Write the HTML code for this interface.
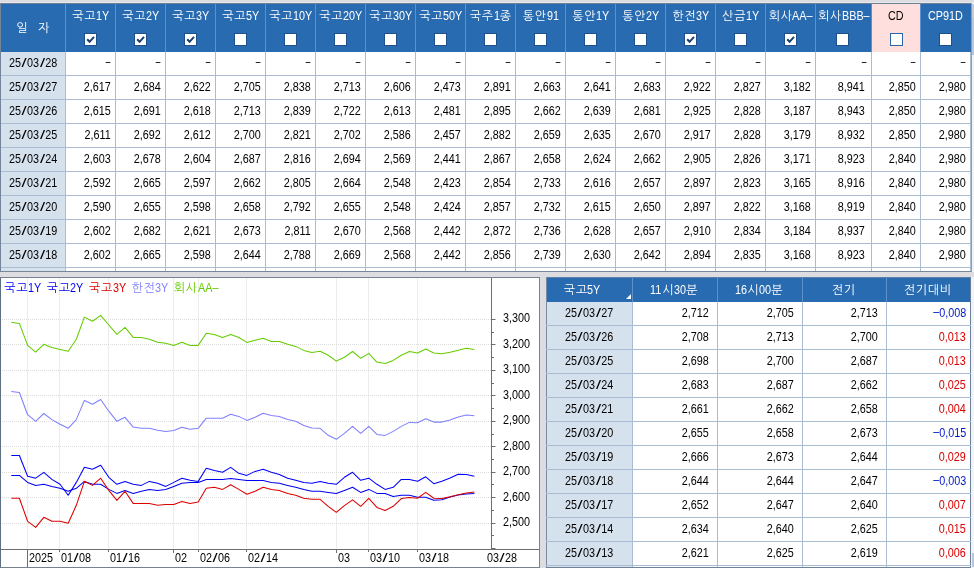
<!DOCTYPE html><html lang="ko"><head><meta charset="utf-8"><title>채권 금리</title><style>

html,body{margin:0;padding:0}
body{width:974px;height:568px;overflow:hidden;background:#dddde1;position:relative;font-family:"Liberation Sans","NanumGothic",sans-serif;font-size:13.5px;color:#000}
div,span,svg{box-sizing:border-box}
#w{position:absolute;left:0;top:0;width:974px;height:568px;will-change:transform}
.abs,.c,.l,.h,.d,.n{position:absolute}
.k{display:inline-block;width:12px;height:14px;line-height:14px;font-size:12px;text-align:center;vertical-align:baseline;overflow:visible;white-space:nowrap;font-family:"Liberation Sans","NanumGothic",sans-serif}
.t{display:inline-block;transform:scaleX(.80);transform-origin:0 50%;white-space:pre;text-align:left}
.lab{position:absolute;height:14px;line-height:14px;white-space:nowrap;text-align:center;color:#fff}
.n{height:14px;line-height:14px;text-align:right;white-space:nowrap}
.n b{font-weight:normal;display:inline-block;transform:scaleX(.80);transform-origin:100% 50%}
.d{height:14px;line-height:14px;text-align:center;white-space:nowrap}
.d b{font-weight:normal;display:inline-block;transform:scaleX(.80);transform-origin:50% 50%}
.d i,.x i{font-style:normal;display:inline-block;transform:scaleX(1.7);margin:0 1.9px}
.x{position:absolute;height:14px;line-height:14px;white-space:nowrap}
.x b{font-weight:normal;display:inline-block;transform:scaleX(.80);transform-origin:0 50%}
.cb{position:absolute;width:13px;height:13px;background:#fff;border:1px solid #1d4f8a}
.cb svg{position:absolute;left:0;top:0;width:11px;height:11px}
.n u{text-decoration:none;position:relative;top:-1px}
.red{color:#d80000}.blu{color:#0018c8}

</style></head><body><div id="w">
<div class="abs" style="left:0px;top:2px;width:974px;height:1px;background:#e8e8ec;"></div>
<div class="abs" style="left:0px;top:3px;width:971px;height:269px;background:#fff;"></div>
<div class="abs" style="left:0px;top:3px;width:971px;height:1px;background:#6f8197;"></div>
<div class="abs" style="left:0px;top:4px;width:971px;height:48px;background:#286bb1;"></div>
<div class="abs" style="left:871px;top:4px;width:49px;height:48px;background:#ffdede;"></div>
<div class="abs" style="left:1px;top:52px;width:64px;height:219px;background:#d6e1ee;"></div>
<div class="abs" style="left:65px;top:4px;width:1px;height:48px;background:#5f90c8;"></div>
<div class="abs" style="left:115px;top:4px;width:1px;height:48px;background:#5f90c8;"></div>
<div class="abs" style="left:165px;top:4px;width:1px;height:48px;background:#5f90c8;"></div>
<div class="abs" style="left:215px;top:4px;width:1px;height:48px;background:#5f90c8;"></div>
<div class="abs" style="left:265px;top:4px;width:1px;height:48px;background:#5f90c8;"></div>
<div class="abs" style="left:315px;top:4px;width:1px;height:48px;background:#5f90c8;"></div>
<div class="abs" style="left:365px;top:4px;width:1px;height:48px;background:#5f90c8;"></div>
<div class="abs" style="left:415px;top:4px;width:1px;height:48px;background:#5f90c8;"></div>
<div class="abs" style="left:465px;top:4px;width:1px;height:48px;background:#5f90c8;"></div>
<div class="abs" style="left:515px;top:4px;width:1px;height:48px;background:#5f90c8;"></div>
<div class="abs" style="left:565px;top:4px;width:1px;height:48px;background:#5f90c8;"></div>
<div class="abs" style="left:615px;top:4px;width:1px;height:48px;background:#5f90c8;"></div>
<div class="abs" style="left:665px;top:4px;width:1px;height:48px;background:#5f90c8;"></div>
<div class="abs" style="left:715px;top:4px;width:1px;height:48px;background:#5f90c8;"></div>
<div class="abs" style="left:765px;top:4px;width:1px;height:48px;background:#5f90c8;"></div>
<div class="abs" style="left:815px;top:4px;width:1px;height:48px;background:#5f90c8;"></div>
<div class="abs" style="left:871px;top:4px;width:1px;height:48px;background:#5f90c8;"></div>
<div class="abs" style="left:920px;top:4px;width:1px;height:48px;background:#5f90c8;"></div>
<div class="abs" style="left:65px;top:52px;width:1px;height:219px;background:#a9bcd1;"></div>
<div class="abs" style="left:115px;top:52px;width:1px;height:219px;background:#a9bcd1;"></div>
<div class="abs" style="left:165px;top:52px;width:1px;height:219px;background:#a9bcd1;"></div>
<div class="abs" style="left:215px;top:52px;width:1px;height:219px;background:#a9bcd1;"></div>
<div class="abs" style="left:265px;top:52px;width:1px;height:219px;background:#a9bcd1;"></div>
<div class="abs" style="left:315px;top:52px;width:1px;height:219px;background:#a9bcd1;"></div>
<div class="abs" style="left:365px;top:52px;width:1px;height:219px;background:#a9bcd1;"></div>
<div class="abs" style="left:415px;top:52px;width:1px;height:219px;background:#a9bcd1;"></div>
<div class="abs" style="left:465px;top:52px;width:1px;height:219px;background:#a9bcd1;"></div>
<div class="abs" style="left:515px;top:52px;width:1px;height:219px;background:#a9bcd1;"></div>
<div class="abs" style="left:565px;top:52px;width:1px;height:219px;background:#a9bcd1;"></div>
<div class="abs" style="left:615px;top:52px;width:1px;height:219px;background:#a9bcd1;"></div>
<div class="abs" style="left:665px;top:52px;width:1px;height:219px;background:#a9bcd1;"></div>
<div class="abs" style="left:715px;top:52px;width:1px;height:219px;background:#a9bcd1;"></div>
<div class="abs" style="left:765px;top:52px;width:1px;height:219px;background:#a9bcd1;"></div>
<div class="abs" style="left:815px;top:52px;width:1px;height:219px;background:#a9bcd1;"></div>
<div class="abs" style="left:871px;top:52px;width:1px;height:219px;background:#a9bcd1;"></div>
<div class="abs" style="left:920px;top:52px;width:1px;height:219px;background:#a9bcd1;"></div>
<div class="abs" style="left:970px;top:52px;width:1px;height:219px;background:#a9bcd1;"></div>
<div class="abs" style="left:1px;top:75px;width:969px;height:1px;background:#a9bcd1;"></div>
<div class="abs" style="left:1px;top:99px;width:969px;height:1px;background:#a9bcd1;"></div>
<div class="abs" style="left:1px;top:123px;width:969px;height:1px;background:#a9bcd1;"></div>
<div class="abs" style="left:1px;top:147px;width:969px;height:1px;background:#a9bcd1;"></div>
<div class="abs" style="left:1px;top:171px;width:969px;height:1px;background:#a9bcd1;"></div>
<div class="abs" style="left:1px;top:195px;width:969px;height:1px;background:#a9bcd1;"></div>
<div class="abs" style="left:1px;top:219px;width:969px;height:1px;background:#a9bcd1;"></div>
<div class="abs" style="left:1px;top:243px;width:969px;height:1px;background:#a9bcd1;"></div>
<div class="abs" style="left:1px;top:267px;width:969px;height:1px;background:#a9bcd1;"></div>
<div class="abs" style="left:0px;top:3px;width:1px;height:269px;background:#73859b;"></div>
<div class="abs" style="left:0px;top:271px;width:971px;height:1px;background:#77879a;"></div>
<div class="abs" style="left:971px;top:3px;width:3px;height:269px;background:#f2f3f7;"></div>
<div class="abs" style="left:971px;top:3px;width:1px;height:269px;background:#8d9db2;"></div>
<div class="abs" style="left:972px;top:4px;width:2px;height:14px;background:#c8ccd4;"></div>
<div class="abs" style="left:972px;top:18px;width:2px;height:37px;background:#b9c7dc;"></div>
<div class="lab" style="left:1px;top:21px;width:64px"><span class="k">일</span><span style="display:inline-block;width:10px"></span><span class="k">자</span></div>
<div class="lab" style="left:50.5px;top:9px;width:80px;color:#fff"><span class="k">국</span><span class="k">고</span><span class="t" style="width:13.2px">1Y</span></div>
<div class="cb" style="left:84px;top:33px"><svg viewBox="0 0 11 11"><path d="M2.2 5.2 L4.6 7.8 L9 2.8" fill="none" stroke="#1b3f6f" stroke-width="2"/></svg></div>
<div class="lab" style="left:100.5px;top:9px;width:80px;color:#fff"><span class="k">국</span><span class="k">고</span><span class="t" style="width:13.2px">2Y</span></div>
<div class="cb" style="left:134px;top:33px"><svg viewBox="0 0 11 11"><path d="M2.2 5.2 L4.6 7.8 L9 2.8" fill="none" stroke="#1b3f6f" stroke-width="2"/></svg></div>
<div class="lab" style="left:150.5px;top:9px;width:80px;color:#fff"><span class="k">국</span><span class="k">고</span><span class="t" style="width:13.2px">3Y</span></div>
<div class="cb" style="left:184px;top:33px"><svg viewBox="0 0 11 11"><path d="M2.2 5.2 L4.6 7.8 L9 2.8" fill="none" stroke="#1b3f6f" stroke-width="2"/></svg></div>
<div class="lab" style="left:200.5px;top:9px;width:80px;color:#fff"><span class="k">국</span><span class="k">고</span><span class="t" style="width:13.2px">5Y</span></div>
<div class="cb" style="left:234px;top:33px"></div>
<div class="lab" style="left:250.5px;top:9px;width:80px;color:#fff"><span class="k">국</span><span class="k">고</span><span class="t" style="width:19.2px">10Y</span></div>
<div class="cb" style="left:284px;top:33px"></div>
<div class="lab" style="left:300.5px;top:9px;width:80px;color:#fff"><span class="k">국</span><span class="k">고</span><span class="t" style="width:19.2px">20Y</span></div>
<div class="cb" style="left:334px;top:33px"></div>
<div class="lab" style="left:350.5px;top:9px;width:80px;color:#fff"><span class="k">국</span><span class="k">고</span><span class="t" style="width:19.2px">30Y</span></div>
<div class="cb" style="left:384px;top:33px"></div>
<div class="lab" style="left:400.5px;top:9px;width:80px;color:#fff"><span class="k">국</span><span class="k">고</span><span class="t" style="width:19.2px">50Y</span></div>
<div class="cb" style="left:434px;top:33px"></div>
<div class="lab" style="left:450.5px;top:9px;width:80px;color:#fff"><span class="k">국</span><span class="k">주</span><span class="t" style="width:6.0px">1</span><span class="k">종</span></div>
<div class="cb" style="left:484px;top:33px"></div>
<div class="lab" style="left:500.5px;top:9px;width:80px;color:#fff"><span class="k">통</span><span class="k">안</span><span class="t" style="width:12.0px">91</span></div>
<div class="cb" style="left:534px;top:33px"></div>
<div class="lab" style="left:550.5px;top:9px;width:80px;color:#fff"><span class="k">통</span><span class="k">안</span><span class="t" style="width:13.2px">1Y</span></div>
<div class="cb" style="left:584px;top:33px"></div>
<div class="lab" style="left:600.5px;top:9px;width:80px;color:#fff"><span class="k">통</span><span class="k">안</span><span class="t" style="width:13.2px">2Y</span></div>
<div class="cb" style="left:634px;top:33px"></div>
<div class="lab" style="left:650.5px;top:9px;width:80px;color:#fff"><span class="k">한</span><span class="k">전</span><span class="t" style="width:13.2px">3Y</span></div>
<div class="cb" style="left:684px;top:33px"><svg viewBox="0 0 11 11"><path d="M2.2 5.2 L4.6 7.8 L9 2.8" fill="none" stroke="#1b3f6f" stroke-width="2"/></svg></div>
<div class="lab" style="left:700.5px;top:9px;width:80px;color:#fff"><span class="k">산</span><span class="k">금</span><span class="t" style="width:13.2px">1Y</span></div>
<div class="cb" style="left:734px;top:33px"></div>
<div class="lab" style="left:750.5px;top:9px;width:80px;color:#fff"><span class="k">회</span><span class="k">사</span><span class="t" style="width:20.4px">AA–</span></div>
<div class="cb" style="left:784px;top:33px"><svg viewBox="0 0 11 11"><path d="M2.2 5.2 L4.6 7.8 L9 2.8" fill="none" stroke="#1b3f6f" stroke-width="2"/></svg></div>
<div class="lab" style="left:803.5px;top:9px;width:80px;color:#fff"><span class="k">회</span><span class="k">사</span><span class="t" style="width:27.6px">BBB–</span></div>
<div class="cb" style="left:836px;top:33px"></div>
<div class="lab" style="left:856px;top:9px;width:80px;color:#000"><span class="t" style="width:15.6px">CD</span></div>
<div class="cb" style="left:890px;top:33px;border-color:#2d66a8"></div>
<div class="lab" style="left:905.5px;top:9px;width:80px;color:#fff"><span class="t" style="width:34.8px">CP91D</span></div>
<div class="cb" style="left:939px;top:33px"></div>
<div class="d" style="left:1px;top:56px;width:64px"><b>25<i>/</i>03<i>/</i>28</b></div>
<div class="n" style="left:65px;top:55px;width:46px"><b style="transform:scaleX(.62)">–</b></div>
<div class="n" style="left:115px;top:55px;width:46px"><b style="transform:scaleX(.62)">–</b></div>
<div class="n" style="left:165px;top:55px;width:46px"><b style="transform:scaleX(.62)">–</b></div>
<div class="n" style="left:215px;top:55px;width:46px"><b style="transform:scaleX(.62)">–</b></div>
<div class="n" style="left:265px;top:55px;width:46px"><b style="transform:scaleX(.62)">–</b></div>
<div class="n" style="left:315px;top:55px;width:46px"><b style="transform:scaleX(.62)">–</b></div>
<div class="n" style="left:365px;top:55px;width:46px"><b style="transform:scaleX(.62)">–</b></div>
<div class="n" style="left:415px;top:55px;width:46px"><b style="transform:scaleX(.62)">–</b></div>
<div class="n" style="left:465px;top:55px;width:46px"><b style="transform:scaleX(.62)">–</b></div>
<div class="n" style="left:515px;top:55px;width:46px"><b style="transform:scaleX(.62)">–</b></div>
<div class="n" style="left:565px;top:55px;width:46px"><b style="transform:scaleX(.62)">–</b></div>
<div class="n" style="left:615px;top:55px;width:46px"><b style="transform:scaleX(.62)">–</b></div>
<div class="n" style="left:665px;top:55px;width:46px"><b style="transform:scaleX(.62)">–</b></div>
<div class="n" style="left:715px;top:55px;width:46px"><b style="transform:scaleX(.62)">–</b></div>
<div class="n" style="left:765px;top:55px;width:46px"><b style="transform:scaleX(.62)">–</b></div>
<div class="n" style="left:815px;top:55px;width:52px"><b style="transform:scaleX(.62)">–</b></div>
<div class="n" style="left:871px;top:55px;width:45px"><b style="transform:scaleX(.62)">–</b></div>
<div class="n" style="left:920px;top:55px;width:46px"><b style="transform:scaleX(.62)">–</b></div>
<div class="d" style="left:1px;top:80px;width:64px"><b>25<i>/</i>03<i>/</i>27</b></div>
<div class="n" style="left:65px;top:80px;width:46px"><b>2,617</b></div>
<div class="n" style="left:115px;top:80px;width:46px"><b>2,684</b></div>
<div class="n" style="left:165px;top:80px;width:46px"><b>2,622</b></div>
<div class="n" style="left:215px;top:80px;width:46px"><b>2,705</b></div>
<div class="n" style="left:265px;top:80px;width:46px"><b>2,838</b></div>
<div class="n" style="left:315px;top:80px;width:46px"><b>2,713</b></div>
<div class="n" style="left:365px;top:80px;width:46px"><b>2,606</b></div>
<div class="n" style="left:415px;top:80px;width:46px"><b>2,473</b></div>
<div class="n" style="left:465px;top:80px;width:46px"><b>2,891</b></div>
<div class="n" style="left:515px;top:80px;width:46px"><b>2,663</b></div>
<div class="n" style="left:565px;top:80px;width:46px"><b>2,641</b></div>
<div class="n" style="left:615px;top:80px;width:46px"><b>2,683</b></div>
<div class="n" style="left:665px;top:80px;width:46px"><b>2,922</b></div>
<div class="n" style="left:715px;top:80px;width:46px"><b>2,827</b></div>
<div class="n" style="left:765px;top:80px;width:46px"><b>3,182</b></div>
<div class="n" style="left:815px;top:80px;width:50px"><b>8,941</b></div>
<div class="n" style="left:871px;top:80px;width:45px"><b>2,850</b></div>
<div class="n" style="left:920px;top:80px;width:46px"><b>2,980</b></div>
<div class="d" style="left:1px;top:104px;width:64px"><b>25<i>/</i>03<i>/</i>26</b></div>
<div class="n" style="left:65px;top:104px;width:46px"><b>2,615</b></div>
<div class="n" style="left:115px;top:104px;width:46px"><b>2,691</b></div>
<div class="n" style="left:165px;top:104px;width:46px"><b>2,618</b></div>
<div class="n" style="left:215px;top:104px;width:46px"><b>2,713</b></div>
<div class="n" style="left:265px;top:104px;width:46px"><b>2,839</b></div>
<div class="n" style="left:315px;top:104px;width:46px"><b>2,722</b></div>
<div class="n" style="left:365px;top:104px;width:46px"><b>2,613</b></div>
<div class="n" style="left:415px;top:104px;width:46px"><b>2,481</b></div>
<div class="n" style="left:465px;top:104px;width:46px"><b>2,895</b></div>
<div class="n" style="left:515px;top:104px;width:46px"><b>2,662</b></div>
<div class="n" style="left:565px;top:104px;width:46px"><b>2,639</b></div>
<div class="n" style="left:615px;top:104px;width:46px"><b>2,681</b></div>
<div class="n" style="left:665px;top:104px;width:46px"><b>2,925</b></div>
<div class="n" style="left:715px;top:104px;width:46px"><b>2,828</b></div>
<div class="n" style="left:765px;top:104px;width:46px"><b>3,187</b></div>
<div class="n" style="left:815px;top:104px;width:50px"><b>8,943</b></div>
<div class="n" style="left:871px;top:104px;width:45px"><b>2,850</b></div>
<div class="n" style="left:920px;top:104px;width:46px"><b>2,980</b></div>
<div class="d" style="left:1px;top:128px;width:64px"><b>25<i>/</i>03<i>/</i>25</b></div>
<div class="n" style="left:65px;top:128px;width:46px"><b>2,611</b></div>
<div class="n" style="left:115px;top:128px;width:46px"><b>2,692</b></div>
<div class="n" style="left:165px;top:128px;width:46px"><b>2,612</b></div>
<div class="n" style="left:215px;top:128px;width:46px"><b>2,700</b></div>
<div class="n" style="left:265px;top:128px;width:46px"><b>2,821</b></div>
<div class="n" style="left:315px;top:128px;width:46px"><b>2,702</b></div>
<div class="n" style="left:365px;top:128px;width:46px"><b>2,586</b></div>
<div class="n" style="left:415px;top:128px;width:46px"><b>2,457</b></div>
<div class="n" style="left:465px;top:128px;width:46px"><b>2,882</b></div>
<div class="n" style="left:515px;top:128px;width:46px"><b>2,659</b></div>
<div class="n" style="left:565px;top:128px;width:46px"><b>2,635</b></div>
<div class="n" style="left:615px;top:128px;width:46px"><b>2,670</b></div>
<div class="n" style="left:665px;top:128px;width:46px"><b>2,917</b></div>
<div class="n" style="left:715px;top:128px;width:46px"><b>2,828</b></div>
<div class="n" style="left:765px;top:128px;width:46px"><b>3,179</b></div>
<div class="n" style="left:815px;top:128px;width:50px"><b>8,932</b></div>
<div class="n" style="left:871px;top:128px;width:45px"><b>2,850</b></div>
<div class="n" style="left:920px;top:128px;width:46px"><b>2,980</b></div>
<div class="d" style="left:1px;top:152px;width:64px"><b>25<i>/</i>03<i>/</i>24</b></div>
<div class="n" style="left:65px;top:152px;width:46px"><b>2,603</b></div>
<div class="n" style="left:115px;top:152px;width:46px"><b>2,678</b></div>
<div class="n" style="left:165px;top:152px;width:46px"><b>2,604</b></div>
<div class="n" style="left:215px;top:152px;width:46px"><b>2,687</b></div>
<div class="n" style="left:265px;top:152px;width:46px"><b>2,816</b></div>
<div class="n" style="left:315px;top:152px;width:46px"><b>2,694</b></div>
<div class="n" style="left:365px;top:152px;width:46px"><b>2,569</b></div>
<div class="n" style="left:415px;top:152px;width:46px"><b>2,441</b></div>
<div class="n" style="left:465px;top:152px;width:46px"><b>2,867</b></div>
<div class="n" style="left:515px;top:152px;width:46px"><b>2,658</b></div>
<div class="n" style="left:565px;top:152px;width:46px"><b>2,624</b></div>
<div class="n" style="left:615px;top:152px;width:46px"><b>2,662</b></div>
<div class="n" style="left:665px;top:152px;width:46px"><b>2,905</b></div>
<div class="n" style="left:715px;top:152px;width:46px"><b>2,826</b></div>
<div class="n" style="left:765px;top:152px;width:46px"><b>3,171</b></div>
<div class="n" style="left:815px;top:152px;width:50px"><b>8,923</b></div>
<div class="n" style="left:871px;top:152px;width:45px"><b>2,840</b></div>
<div class="n" style="left:920px;top:152px;width:46px"><b>2,980</b></div>
<div class="d" style="left:1px;top:176px;width:64px"><b>25<i>/</i>03<i>/</i>21</b></div>
<div class="n" style="left:65px;top:176px;width:46px"><b>2,592</b></div>
<div class="n" style="left:115px;top:176px;width:46px"><b>2,665</b></div>
<div class="n" style="left:165px;top:176px;width:46px"><b>2,597</b></div>
<div class="n" style="left:215px;top:176px;width:46px"><b>2,662</b></div>
<div class="n" style="left:265px;top:176px;width:46px"><b>2,805</b></div>
<div class="n" style="left:315px;top:176px;width:46px"><b>2,664</b></div>
<div class="n" style="left:365px;top:176px;width:46px"><b>2,548</b></div>
<div class="n" style="left:415px;top:176px;width:46px"><b>2,423</b></div>
<div class="n" style="left:465px;top:176px;width:46px"><b>2,854</b></div>
<div class="n" style="left:515px;top:176px;width:46px"><b>2,733</b></div>
<div class="n" style="left:565px;top:176px;width:46px"><b>2,616</b></div>
<div class="n" style="left:615px;top:176px;width:46px"><b>2,657</b></div>
<div class="n" style="left:665px;top:176px;width:46px"><b>2,897</b></div>
<div class="n" style="left:715px;top:176px;width:46px"><b>2,823</b></div>
<div class="n" style="left:765px;top:176px;width:46px"><b>3,165</b></div>
<div class="n" style="left:815px;top:176px;width:50px"><b>8,916</b></div>
<div class="n" style="left:871px;top:176px;width:45px"><b>2,840</b></div>
<div class="n" style="left:920px;top:176px;width:46px"><b>2,980</b></div>
<div class="d" style="left:1px;top:200px;width:64px"><b>25<i>/</i>03<i>/</i>20</b></div>
<div class="n" style="left:65px;top:200px;width:46px"><b>2,590</b></div>
<div class="n" style="left:115px;top:200px;width:46px"><b>2,655</b></div>
<div class="n" style="left:165px;top:200px;width:46px"><b>2,598</b></div>
<div class="n" style="left:215px;top:200px;width:46px"><b>2,658</b></div>
<div class="n" style="left:265px;top:200px;width:46px"><b>2,792</b></div>
<div class="n" style="left:315px;top:200px;width:46px"><b>2,655</b></div>
<div class="n" style="left:365px;top:200px;width:46px"><b>2,548</b></div>
<div class="n" style="left:415px;top:200px;width:46px"><b>2,424</b></div>
<div class="n" style="left:465px;top:200px;width:46px"><b>2,857</b></div>
<div class="n" style="left:515px;top:200px;width:46px"><b>2,732</b></div>
<div class="n" style="left:565px;top:200px;width:46px"><b>2,615</b></div>
<div class="n" style="left:615px;top:200px;width:46px"><b>2,650</b></div>
<div class="n" style="left:665px;top:200px;width:46px"><b>2,897</b></div>
<div class="n" style="left:715px;top:200px;width:46px"><b>2,822</b></div>
<div class="n" style="left:765px;top:200px;width:46px"><b>3,168</b></div>
<div class="n" style="left:815px;top:200px;width:50px"><b>8,919</b></div>
<div class="n" style="left:871px;top:200px;width:45px"><b>2,840</b></div>
<div class="n" style="left:920px;top:200px;width:46px"><b>2,980</b></div>
<div class="d" style="left:1px;top:224px;width:64px"><b>25<i>/</i>03<i>/</i>19</b></div>
<div class="n" style="left:65px;top:224px;width:46px"><b>2,602</b></div>
<div class="n" style="left:115px;top:224px;width:46px"><b>2,682</b></div>
<div class="n" style="left:165px;top:224px;width:46px"><b>2,621</b></div>
<div class="n" style="left:215px;top:224px;width:46px"><b>2,673</b></div>
<div class="n" style="left:265px;top:224px;width:46px"><b>2,811</b></div>
<div class="n" style="left:315px;top:224px;width:46px"><b>2,670</b></div>
<div class="n" style="left:365px;top:224px;width:46px"><b>2,568</b></div>
<div class="n" style="left:415px;top:224px;width:46px"><b>2,442</b></div>
<div class="n" style="left:465px;top:224px;width:46px"><b>2,872</b></div>
<div class="n" style="left:515px;top:224px;width:46px"><b>2,736</b></div>
<div class="n" style="left:565px;top:224px;width:46px"><b>2,628</b></div>
<div class="n" style="left:615px;top:224px;width:46px"><b>2,657</b></div>
<div class="n" style="left:665px;top:224px;width:46px"><b>2,910</b></div>
<div class="n" style="left:715px;top:224px;width:46px"><b>2,834</b></div>
<div class="n" style="left:765px;top:224px;width:46px"><b>3,184</b></div>
<div class="n" style="left:815px;top:224px;width:50px"><b>8,937</b></div>
<div class="n" style="left:871px;top:224px;width:45px"><b>2,840</b></div>
<div class="n" style="left:920px;top:224px;width:46px"><b>2,980</b></div>
<div class="d" style="left:1px;top:248px;width:64px"><b>25<i>/</i>03<i>/</i>18</b></div>
<div class="n" style="left:65px;top:248px;width:46px"><b>2,602</b></div>
<div class="n" style="left:115px;top:248px;width:46px"><b>2,665</b></div>
<div class="n" style="left:165px;top:248px;width:46px"><b>2,598</b></div>
<div class="n" style="left:215px;top:248px;width:46px"><b>2,644</b></div>
<div class="n" style="left:265px;top:248px;width:46px"><b>2,788</b></div>
<div class="n" style="left:315px;top:248px;width:46px"><b>2,669</b></div>
<div class="n" style="left:365px;top:248px;width:46px"><b>2,568</b></div>
<div class="n" style="left:415px;top:248px;width:46px"><b>2,442</b></div>
<div class="n" style="left:465px;top:248px;width:46px"><b>2,856</b></div>
<div class="n" style="left:515px;top:248px;width:46px"><b>2,739</b></div>
<div class="n" style="left:565px;top:248px;width:46px"><b>2,630</b></div>
<div class="n" style="left:615px;top:248px;width:46px"><b>2,642</b></div>
<div class="n" style="left:665px;top:248px;width:46px"><b>2,894</b></div>
<div class="n" style="left:715px;top:248px;width:46px"><b>2,835</b></div>
<div class="n" style="left:765px;top:248px;width:46px"><b>3,168</b></div>
<div class="n" style="left:815px;top:248px;width:50px"><b>8,923</b></div>
<div class="n" style="left:871px;top:248px;width:45px"><b>2,840</b></div>
<div class="n" style="left:920px;top:248px;width:46px"><b>2,980</b></div>
<div class="abs" style="left:0px;top:277px;width:540px;height:291px;background:#fff;border:1px solid #76828f;border-left-color:#5f6f82"></div>
<svg class="abs" style="left:0;top:277px" width="541" height="291" viewBox="0 0 541 291">
<line x1="27.5" y1="1" x2="27.5" y2="272" stroke="#ececec" stroke-width="1"/>
<line x1="59.5" y1="1" x2="59.5" y2="272" stroke="#ececec" stroke-width="1"/>
<line x1="108.5" y1="1" x2="108.5" y2="272" stroke="#ececec" stroke-width="1"/>
<line x1="173.5" y1="1" x2="173.5" y2="272" stroke="#ececec" stroke-width="1"/>
<line x1="198.5" y1="1" x2="198.5" y2="272" stroke="#ececec" stroke-width="1"/>
<line x1="246.5" y1="1" x2="246.5" y2="272" stroke="#ececec" stroke-width="1"/>
<line x1="336.5" y1="1" x2="336.5" y2="272" stroke="#ececec" stroke-width="1"/>
<line x1="368.5" y1="1" x2="368.5" y2="272" stroke="#ececec" stroke-width="1"/>
<line x1="417.5" y1="1" x2="417.5" y2="272" stroke="#ececec" stroke-width="1"/>
<line x1="2" y1="246.5" x2="491" y2="246.5" stroke="#dcdcdc" stroke-width="1" stroke-dasharray="1 1"/>
<line x1="2" y1="220.5" x2="491" y2="220.5" stroke="#dcdcdc" stroke-width="1" stroke-dasharray="1 1"/>
<line x1="2" y1="195.5" x2="491" y2="195.5" stroke="#dcdcdc" stroke-width="1" stroke-dasharray="1 1"/>
<line x1="2" y1="169.5" x2="491" y2="169.5" stroke="#dcdcdc" stroke-width="1" stroke-dasharray="1 1"/>
<line x1="2" y1="144.5" x2="491" y2="144.5" stroke="#dcdcdc" stroke-width="1" stroke-dasharray="1 1"/>
<line x1="2" y1="118.5" x2="491" y2="118.5" stroke="#dcdcdc" stroke-width="1" stroke-dasharray="1 1"/>
<line x1="2" y1="93.5" x2="491" y2="93.5" stroke="#dcdcdc" stroke-width="1" stroke-dasharray="1 1"/>
<line x1="2" y1="67.5" x2="491" y2="67.5" stroke="#dcdcdc" stroke-width="1" stroke-dasharray="1 1"/>
<line x1="2" y1="42.5" x2="491" y2="42.5" stroke="#dcdcdc" stroke-width="1" stroke-dasharray="1 1"/>
<line x1="1" y1="272.5" x2="539" y2="272.5" stroke="#6e6e6e" stroke-width="1"/>
<line x1="491.5" y1="1" x2="491.5" y2="273" stroke="#6e6e6e" stroke-width="1"/>
<line x1="492" y1="271.5" x2="495.5" y2="271.5" stroke="#6e6e6e"/>
<line x1="492" y1="258.5" x2="494" y2="258.5" stroke="#6e6e6e"/>
<line x1="492" y1="246.5" x2="495.5" y2="246.5" stroke="#6e6e6e"/>
<line x1="492" y1="233.5" x2="494" y2="233.5" stroke="#6e6e6e"/>
<line x1="492" y1="220.5" x2="495.5" y2="220.5" stroke="#6e6e6e"/>
<line x1="492" y1="207.5" x2="494" y2="207.5" stroke="#6e6e6e"/>
<line x1="492" y1="195.5" x2="495.5" y2="195.5" stroke="#6e6e6e"/>
<line x1="492" y1="182.5" x2="494" y2="182.5" stroke="#6e6e6e"/>
<line x1="492" y1="169.5" x2="495.5" y2="169.5" stroke="#6e6e6e"/>
<line x1="492" y1="157.5" x2="494" y2="157.5" stroke="#6e6e6e"/>
<line x1="492" y1="144.5" x2="495.5" y2="144.5" stroke="#6e6e6e"/>
<line x1="492" y1="131.5" x2="494" y2="131.5" stroke="#6e6e6e"/>
<line x1="492" y1="118.5" x2="495.5" y2="118.5" stroke="#6e6e6e"/>
<line x1="492" y1="106.5" x2="494" y2="106.5" stroke="#6e6e6e"/>
<line x1="492" y1="93.5" x2="495.5" y2="93.5" stroke="#6e6e6e"/>
<line x1="492" y1="80.5" x2="494" y2="80.5" stroke="#6e6e6e"/>
<line x1="492" y1="67.5" x2="495.5" y2="67.5" stroke="#6e6e6e"/>
<line x1="492" y1="55.5" x2="494" y2="55.5" stroke="#6e6e6e"/>
<line x1="492" y1="42.5" x2="495.5" y2="42.5" stroke="#6e6e6e"/>
<line x1="27.5" y1="272" x2="27.5" y2="290" stroke="#6e6e6e"/>
<line x1="59.5" y1="272" x2="59.5" y2="275" stroke="#6e6e6e"/>
<line x1="108.5" y1="272" x2="108.5" y2="275" stroke="#6e6e6e"/>
<line x1="173.5" y1="272" x2="173.5" y2="276" stroke="#6e6e6e"/>
<line x1="198.5" y1="272" x2="198.5" y2="275" stroke="#6e6e6e"/>
<line x1="246.5" y1="272" x2="246.5" y2="275" stroke="#6e6e6e"/>
<line x1="336.5" y1="272" x2="336.5" y2="276" stroke="#6e6e6e"/>
<line x1="368.5" y1="272" x2="368.5" y2="275" stroke="#6e6e6e"/>
<line x1="417.5" y1="272" x2="417.5" y2="275" stroke="#6e6e6e"/>
<polyline points="11.3,45.3 19.4,46.4 27.6,68.4 35.7,75.2 43.8,67.3 51.9,70.5 60.0,72.4 68.2,74.3 76.3,62.3 84.4,40.1 92.5,44.3 100.7,38.4 108.8,48.0 116.9,57.4 125.0,50.4 133.2,60.4 141.3,60.4 149.4,62.3 157.6,65.2 165.7,66.3 173.8,68.4 181.9,65.2 190.1,68.4 198.2,68.4 206.3,56.2 214.4,57.4 222.6,60.4 230.7,57.4 238.8,60.5 246.9,65.4 255.1,63.3 263.2,61.2 271.3,64.4 279.4,64.4 287.6,67.3 295.7,69.4 303.8,73.4 311.9,75.4 320.1,74.3 328.2,78.3 336.3,84.1 344.4,80.3 352.6,74.5 360.7,81.3 368.8,76.4 376.9,85.1 385.1,86.4 393.2,83.4 401.3,78.2 409.4,74.5 417.6,76.0 425.7,72.0 433.8,76.0 441.9,76.8 450.1,75.3 458.2,73.2 466.3,71.2 474.4,72.5" fill="none" stroke="#66cc00" stroke-width="1.05" stroke-linejoin="round"/>
<polyline points="11.3,114.5 19.4,115.5 27.6,137.7 35.7,144.3 43.8,136.5 51.9,142.6 60.0,147.3 68.2,151.3 76.3,142.6 84.4,123.4 92.5,127.2 100.7,122.5 108.8,134.2 116.9,144.3 125.0,140.3 133.2,150.1 141.3,151.3 149.4,151.3 157.6,153.2 165.7,154.4 173.8,153.4 181.9,150.2 190.1,152.3 198.2,151.3 206.3,141.2 214.4,141.2 222.6,141.2 230.7,137.3 238.8,139.4 246.9,143.4 255.1,140.3 263.2,136.3 271.3,138.4 279.4,139.4 287.6,142.4 295.7,144.3 303.8,148.5 311.9,151.1 320.1,151.3 328.2,158.3 336.3,162.3 344.4,156.4 352.6,149.4 360.7,156.4 368.8,149.4 376.9,157.4 385.1,158.4 393.2,154.4 401.3,149.4 409.4,145.4 417.6,145.8 425.7,141.8 433.8,145.1 441.9,145.1 450.1,143.0 458.2,140.0 466.3,137.9 474.4,138.7" fill="none" stroke="#7f7fff" stroke-width="1.05" stroke-linejoin="round"/>
<polyline points="11.3,198.4 19.4,198.4 27.6,205.4 35.7,208.4 43.8,207.3 51.9,209.4 60.0,211.3 68.2,214.3 76.3,211.3 84.4,204.4 92.5,207.3 100.7,207.3 108.8,212.4 116.9,216.4 125.0,213.4 133.2,216.4 141.3,214.3 149.4,212.4 157.6,213.4 165.7,212.4 173.8,209.4 181.9,206.3 190.1,205.4 198.2,205.4 206.3,202.4 214.4,202.4 222.6,202.4 230.7,201.4 238.8,202.4 246.9,203.5 255.1,203.5 263.2,203.5 271.3,205.4 279.4,206.3 287.6,208.4 295.7,210.3 303.8,212.4 311.9,214.3 320.1,214.3 328.2,215.4 336.3,216.4 344.4,213.4 352.6,210.3 360.7,215.4 368.8,212.4 376.9,216.4 385.1,216.4 393.2,219.4 401.3,218.3 409.4,218.3 417.6,220.2 425.7,220.2 433.8,223.3 441.9,222.8 450.1,220.0 458.2,217.9 466.3,216.9 474.4,216.4" fill="none" stroke="#0000f0" stroke-width="1.05" stroke-linejoin="round"/>
<polyline points="11.3,178.5 19.4,178.5 27.6,199.3 35.7,201.2 43.8,195.3 51.9,202.4 60.0,207.3 68.2,218.3 76.3,205.4 84.4,190.2 92.5,192.3 100.7,188.3 108.8,200.3 116.9,207.3 125.0,204.4 133.2,207.3 141.3,208.4 149.4,204.4 157.6,206.3 165.7,209.4 173.8,205.4 181.9,201.2 190.1,203.3 198.2,204.4 206.3,191.3 214.4,193.4 222.6,195.3 230.7,190.4 238.8,196.3 246.9,198.4 255.1,194.4 263.2,192.3 271.3,195.3 279.4,197.4 287.6,201.2 295.7,203.3 303.8,205.4 311.9,206.3 320.1,204.4 328.2,206.3 336.3,207.3 344.4,200.3 352.6,195.3 360.7,203.3 368.8,201.2 376.9,207.3 385.1,212.4 393.2,210.3 401.3,202.4 409.4,202.4 417.6,204.2 425.7,199.8 433.8,206.7 441.9,204.2 450.1,200.9 458.2,197.3 466.3,197.5 474.4,199.3" fill="none" stroke="#0000ff" stroke-width="1.05" stroke-linejoin="round"/>
<polyline points="11.3,221.3 19.4,221.3 27.6,244.3 35.7,250.4 43.8,240.3 51.9,244.3 60.0,244.3 68.2,246.2 76.3,228.3 84.4,204.4 92.5,208.4 100.7,201.2 108.8,213.4 116.9,223.4 125.0,214.3 133.2,226.4 141.3,226.4 149.4,226.4 157.6,228.3 165.7,227.4 173.8,227.4 181.9,224.4 190.1,226.4 198.2,225.1 206.3,211.3 214.4,210.3 222.6,212.4 230.7,207.7 238.8,212.4 246.9,217.3 255.1,214.3 263.2,210.3 271.3,212.4 279.4,213.4 287.6,216.4 295.7,218.3 303.8,221.3 311.9,222.3 320.1,222.3 328.2,229.3 336.3,235.3 344.4,228.6 352.6,222.9 360.7,229.3 368.8,221.3 376.9,230.4 385.1,233.5 393.2,229.3 401.3,221.6 409.4,220.4 417.6,221.2 425.7,215.4 433.8,221.2 441.9,221.5 450.1,219.7 458.2,217.7 466.3,216.1 474.4,215.1" fill="none" stroke="#dd0000" stroke-width="1.05" stroke-linejoin="round"/>
</svg>
<div class="x" style="left:4px;top:281px"><span style="color:#0000ff"><span class="k">국</span><span class="k">고</span><span class="t" style="width:13.2px">1Y</span></span><span style="display:inline-block;width:5.2px"></span><span style="color:#0000e6"><span class="k">국</span><span class="k">고</span><span class="t" style="width:13.2px">2Y</span></span><span style="display:inline-block;width:5.2px"></span><span style="color:#e00000"><span class="k">국</span><span class="k">고</span><span class="t" style="width:13.2px">3Y</span></span><span style="display:inline-block;width:5.2px"></span><span style="color:#8080ff"><span class="k">한</span><span class="k">전</span><span class="t" style="width:13.2px">3Y</span></span><span style="display:inline-block;width:5.2px"></span><span style="color:#66cc00"><span class="k">회</span><span class="k">사</span><span class="t" style="width:20.4px">AA–</span></span></div>
<div class="x" style="left:503px;top:515px"><b>2,500</b></div>
<div class="x" style="left:503px;top:490px"><b>2,600</b></div>
<div class="x" style="left:503px;top:464px"><b>2,700</b></div>
<div class="x" style="left:503px;top:439px"><b>2,800</b></div>
<div class="x" style="left:503px;top:413px"><b>2,900</b></div>
<div class="x" style="left:503px;top:388px"><b>3,000</b></div>
<div class="x" style="left:503px;top:362px"><b>3,100</b></div>
<div class="x" style="left:503px;top:337px"><b>3,200</b></div>
<div class="x" style="left:503px;top:311px"><b>3,300</b></div>
<div class="x" style="left:28.5px;top:551px"><b>2025</b></div>
<div class="x" style="left:60.5px;top:551px"><b>01<i>/</i>08</b></div>
<div class="x" style="left:109.5px;top:551px"><b>01<i>/</i>16</b></div>
<div class="x" style="left:174.5px;top:551px"><b>02</b></div>
<div class="x" style="left:199.5px;top:551px"><b>02<i>/</i>06</b></div>
<div class="x" style="left:247.5px;top:551px"><b>02<i>/</i>14</b></div>
<div class="x" style="left:337.5px;top:551px"><b>03</b></div>
<div class="x" style="left:369.5px;top:551px"><b>03<i>/</i>10</b></div>
<div class="x" style="left:418.5px;top:551px"><b>03<i>/</i>18</b></div>
<div class="x" style="left:487px;top:551px"><b>03<i>/</i>28</b></div>
<div class="abs" style="left:546px;top:277px;width:425px;height:291px;background:#fff;"></div>
<div class="abs" style="left:546px;top:277px;width:425px;height:25px;background:#286bb1;"></div>
<div class="abs" style="left:546px;top:277px;width:425px;height:1px;background:#5f7fa8;"></div>
<div class="abs" style="left:546px;top:302px;width:86px;height:265px;background:#d6e1ee;"></div>
<div class="abs" style="left:632px;top:278px;width:1px;height:24px;background:#5f90c8;"></div>
<div class="abs" style="left:632px;top:302px;width:1px;height:265px;background:#a9bcd1;"></div>
<div class="abs" style="left:717px;top:278px;width:1px;height:24px;background:#5f90c8;"></div>
<div class="abs" style="left:717px;top:302px;width:1px;height:265px;background:#a9bcd1;"></div>
<div class="abs" style="left:802px;top:278px;width:1px;height:24px;background:#5f90c8;"></div>
<div class="abs" style="left:802px;top:302px;width:1px;height:265px;background:#a9bcd1;"></div>
<div class="abs" style="left:886px;top:278px;width:1px;height:24px;background:#5f90c8;"></div>
<div class="abs" style="left:886px;top:302px;width:1px;height:265px;background:#a9bcd1;"></div>
<div class="abs" style="left:546px;top:277px;width:1px;height:291px;background:#7a8ca5;"></div>
<div class="abs" style="left:970px;top:277px;width:1px;height:291px;background:#6a7f97;"></div>
<div class="abs" style="left:546px;top:567px;width:425px;height:1px;background:#6f8197;"></div>
<div class="abs" style="left:546px;top:325px;width:425px;height:1px;background:#a9bcd1;"></div>
<div class="abs" style="left:546px;top:349px;width:425px;height:1px;background:#a9bcd1;"></div>
<div class="abs" style="left:546px;top:373px;width:425px;height:1px;background:#a9bcd1;"></div>
<div class="abs" style="left:546px;top:397px;width:425px;height:1px;background:#a9bcd1;"></div>
<div class="abs" style="left:546px;top:421px;width:425px;height:1px;background:#a9bcd1;"></div>
<div class="abs" style="left:546px;top:445px;width:425px;height:1px;background:#a9bcd1;"></div>
<div class="abs" style="left:546px;top:469px;width:425px;height:1px;background:#a9bcd1;"></div>
<div class="abs" style="left:546px;top:493px;width:425px;height:1px;background:#a9bcd1;"></div>
<div class="abs" style="left:546px;top:517px;width:425px;height:1px;background:#a9bcd1;"></div>
<div class="abs" style="left:546px;top:541px;width:425px;height:1px;background:#a9bcd1;"></div>
<div class="abs" style="left:546px;top:565px;width:425px;height:1px;background:#a9bcd1;"></div>
<div class="abs" style="left:971px;top:277px;width:3px;height:291px;background:#f2f3f7;"></div>
<div class="abs" style="left:972px;top:553px;width:2px;height:14px;background:#b9c7dc;"></div>
<div class="lab" style="left:532px;top:283px;width:100px"><span class="k">국</span><span class="k">고</span><span class="t" style="width:13.2px">5Y</span></div>
<div class="lab" style="left:624px;top:283px;width:100px"><span class="t" style="width:12.0px">11</span><span class="k">시</span><span class="t" style="width:12.0px">30</span><span class="k">분</span></div>
<div class="lab" style="left:709px;top:283px;width:100px"><span class="t" style="width:12.0px">16</span><span class="k">시</span><span class="t" style="width:12.0px">00</span><span class="k">분</span></div>
<div class="lab" style="left:793.5px;top:283px;width:100px"><span class="k">전</span><span class="k">기</span></div>
<div class="lab" style="left:877.5px;top:283px;width:100px"><span class="k">전</span><span class="k">기</span><span class="k">대</span><span class="k">비</span></div>
<svg class="abs" style="left:626px;top:294px" width="5" height="5"><path d="M5 0V5H0Z" fill="#fff"/></svg>
<div class="d" style="left:546px;top:306px;width:86px"><b>25<i>/</i>03<i>/</i>27</b></div>
<div class="n" style="left:632px;top:306px;width:77px"><b>2,712</b></div>
<div class="n" style="left:717px;top:306px;width:77px"><b>2,705</b></div>
<div class="n" style="left:802px;top:306px;width:76px"><b>2,713</b></div>
<div class="n blu" style="left:886px;top:306px;width:80px"><b><u>–</u>0,008</b></div>
<div class="d" style="left:546px;top:330px;width:86px"><b>25<i>/</i>03<i>/</i>26</b></div>
<div class="n" style="left:632px;top:330px;width:77px"><b>2,708</b></div>
<div class="n" style="left:717px;top:330px;width:77px"><b>2,713</b></div>
<div class="n" style="left:802px;top:330px;width:76px"><b>2,700</b></div>
<div class="n red" style="left:886px;top:330px;width:80px"><b>0,013</b></div>
<div class="d" style="left:546px;top:354px;width:86px"><b>25<i>/</i>03<i>/</i>25</b></div>
<div class="n" style="left:632px;top:354px;width:77px"><b>2,698</b></div>
<div class="n" style="left:717px;top:354px;width:77px"><b>2,700</b></div>
<div class="n" style="left:802px;top:354px;width:76px"><b>2,687</b></div>
<div class="n red" style="left:886px;top:354px;width:80px"><b>0,013</b></div>
<div class="d" style="left:546px;top:378px;width:86px"><b>25<i>/</i>03<i>/</i>24</b></div>
<div class="n" style="left:632px;top:378px;width:77px"><b>2,683</b></div>
<div class="n" style="left:717px;top:378px;width:77px"><b>2,687</b></div>
<div class="n" style="left:802px;top:378px;width:76px"><b>2,662</b></div>
<div class="n red" style="left:886px;top:378px;width:80px"><b>0,025</b></div>
<div class="d" style="left:546px;top:402px;width:86px"><b>25<i>/</i>03<i>/</i>21</b></div>
<div class="n" style="left:632px;top:402px;width:77px"><b>2,661</b></div>
<div class="n" style="left:717px;top:402px;width:77px"><b>2,662</b></div>
<div class="n" style="left:802px;top:402px;width:76px"><b>2,658</b></div>
<div class="n red" style="left:886px;top:402px;width:80px"><b>0,004</b></div>
<div class="d" style="left:546px;top:426px;width:86px"><b>25<i>/</i>03<i>/</i>20</b></div>
<div class="n" style="left:632px;top:426px;width:77px"><b>2,655</b></div>
<div class="n" style="left:717px;top:426px;width:77px"><b>2,658</b></div>
<div class="n" style="left:802px;top:426px;width:76px"><b>2,673</b></div>
<div class="n blu" style="left:886px;top:426px;width:80px"><b><u>–</u>0,015</b></div>
<div class="d" style="left:546px;top:450px;width:86px"><b>25<i>/</i>03<i>/</i>19</b></div>
<div class="n" style="left:632px;top:450px;width:77px"><b>2,666</b></div>
<div class="n" style="left:717px;top:450px;width:77px"><b>2,673</b></div>
<div class="n" style="left:802px;top:450px;width:76px"><b>2,644</b></div>
<div class="n red" style="left:886px;top:450px;width:80px"><b>0,029</b></div>
<div class="d" style="left:546px;top:474px;width:86px"><b>25<i>/</i>03<i>/</i>18</b></div>
<div class="n" style="left:632px;top:474px;width:77px"><b>2,644</b></div>
<div class="n" style="left:717px;top:474px;width:77px"><b>2,644</b></div>
<div class="n" style="left:802px;top:474px;width:76px"><b>2,647</b></div>
<div class="n blu" style="left:886px;top:474px;width:80px"><b><u>–</u>0,003</b></div>
<div class="d" style="left:546px;top:498px;width:86px"><b>25<i>/</i>03<i>/</i>17</b></div>
<div class="n" style="left:632px;top:498px;width:77px"><b>2,652</b></div>
<div class="n" style="left:717px;top:498px;width:77px"><b>2,647</b></div>
<div class="n" style="left:802px;top:498px;width:76px"><b>2,640</b></div>
<div class="n red" style="left:886px;top:498px;width:80px"><b>0,007</b></div>
<div class="d" style="left:546px;top:522px;width:86px"><b>25<i>/</i>03<i>/</i>14</b></div>
<div class="n" style="left:632px;top:522px;width:77px"><b>2,634</b></div>
<div class="n" style="left:717px;top:522px;width:77px"><b>2,640</b></div>
<div class="n" style="left:802px;top:522px;width:76px"><b>2,625</b></div>
<div class="n red" style="left:886px;top:522px;width:80px"><b>0,015</b></div>
<div class="d" style="left:546px;top:546px;width:86px"><b>25<i>/</i>03<i>/</i>13</b></div>
<div class="n" style="left:632px;top:546px;width:77px"><b>2,621</b></div>
<div class="n" style="left:717px;top:546px;width:77px"><b>2,625</b></div>
<div class="n" style="left:802px;top:546px;width:76px"><b>2,619</b></div>
<div class="n red" style="left:886px;top:546px;width:80px"><b>0,006</b></div>
</div></body></html>
